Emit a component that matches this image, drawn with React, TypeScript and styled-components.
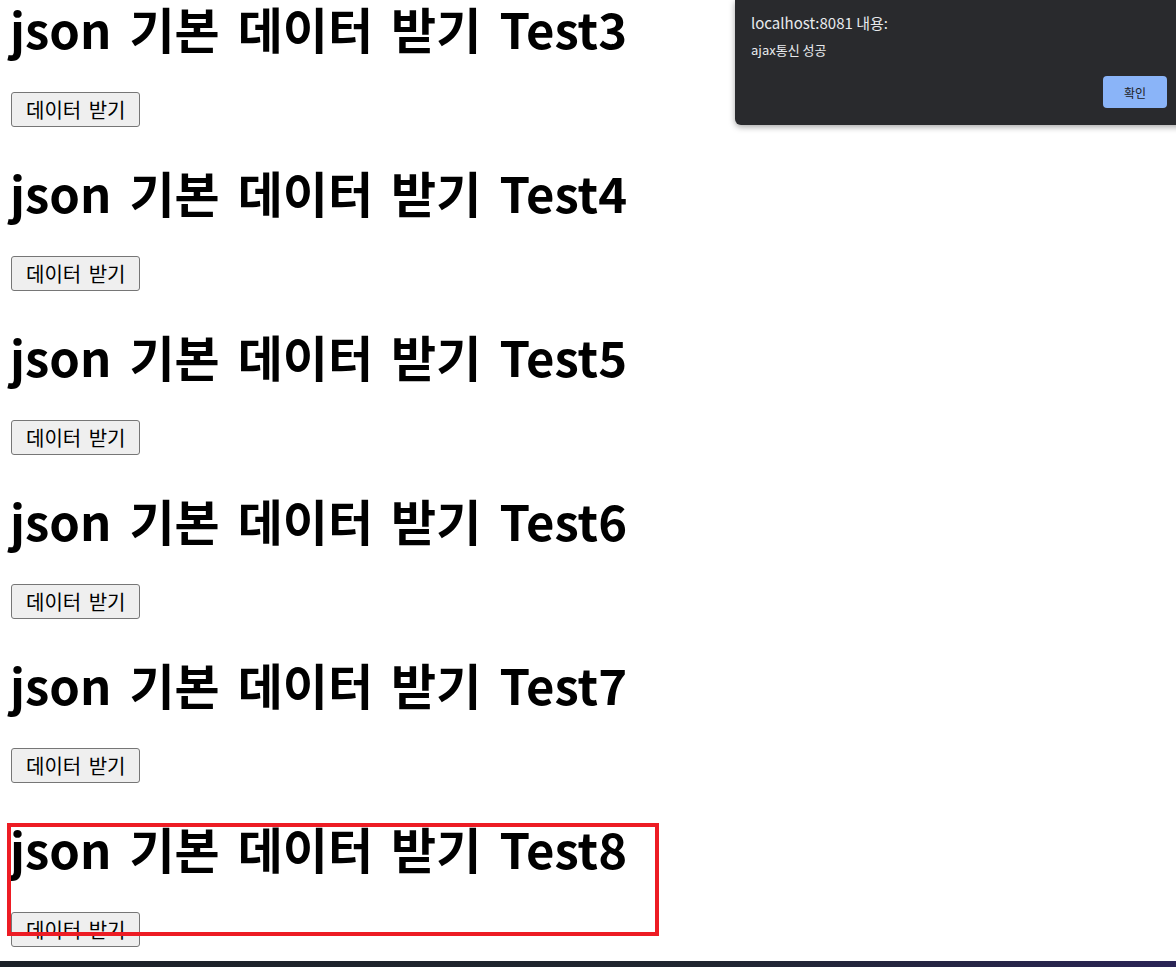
import * as React from 'react';
import styled, { createGlobalStyle } from 'styled-components';

const GlobalStyle = createGlobalStyle`
  html, body {
    margin: 0;
    padding: 0;
    background: #ffffff;
  }
  body {
    font-family: 'Noto Sans CJK KR', 'Noto Sans', sans-serif;
  }
`;

const Page = styled.div`
  position: relative;
  width: 1176px;
  height: 967px;
  overflow: hidden;
  background: #ffffff;
`;

const Content = styled.div`
  padding: 0 12px;
  margin-top: -4px;
`;

const Title = styled.h1`
  margin: 32px 0;
  font-family: 'Noto Sans CJK KR', sans-serif;
  font-size: 49px;
  line-height: 64px;
  font-weight: 700;
  word-spacing: 7px;
  color: #000000;
  margin-left: -2px;
  white-space: nowrap;
  &:first-child {
    margin-top: 0;
  }
`;

const Row = styled.div`
  height: 36px;
  display: flex;
  align-items: flex-start;
`;

const GetButton = styled.button`
  height: 35px;
  padding: 0 14px;
  margin-left: -1px;
  font-family: 'Noto Sans CJK KR', sans-serif;
  font-size: 20px;
  word-spacing: 3px;
  color: #000000;
  background: #efefef;
  border: 1px solid #767676;
  border-radius: 3px;
`;

const Dialog = styled.div`
  position: absolute;
  top: 0;
  left: 735px;
  right: -8px;
  height: 125px;
  background: #292a2d;
  border-radius: 0 0 0 6px;
  box-shadow: 0 2px 6px rgba(0, 0, 0, 0.35);
  padding: 13px 16px 0 16px;
  box-sizing: border-box;
  font-family: 'Noto Sans CJK KR', sans-serif;
  color: #e8eaed;
`;

const DialogTitle = styled.div`
  font-size: 15px;
  line-height: 20px;
`;

const DialogText = styled.div`
  margin-top: 9px;
  font-size: 13px;
  line-height: 16px;
`;

const DialogFooter = styled.div`
  display: flex;
  justify-content: flex-end;
  margin-top: 18px;
  padding-right: 1px;
`;

const OkButton = styled.button`
  width: 64px;
  height: 32px;
  border: none;
  border-radius: 4px;
  background: #8ab4f8;
  color: #202124;
  font-family: 'Noto Sans CJK KR', sans-serif;
  font-size: 12px;
`;

const Highlight = styled.div`
  position: absolute;
  left: 7px;
  top: 823px;
  width: 652px;
  height: 113px;
  box-sizing: border-box;
  border: 4px solid #ed1c24;
  pointer-events: none;
`;

const Taskbar = styled.div`
  position: absolute;
  left: 0;
  right: 0;
  bottom: 0;
  height: 6px;
  background: linear-gradient(90deg, #1c2128 0%, #202630 60%, #2a2456 100%);
`;

const items = [3, 4, 5, 6, 7, 8];

export default function App() {
  return (
    <>
      <GlobalStyle />
      <Page>
        <Content>
          {items.map((n) => (
            <React.Fragment key={n}>
              <Title>json 기본 데이터 받기 Test{n}</Title>
              <Row>
                <GetButton>데이터 받기</GetButton>
              </Row>
            </React.Fragment>
          ))}
        </Content>
        <Dialog>
          <DialogTitle>localhost:8081 내용:</DialogTitle>
          <DialogText>ajax통신 성공</DialogText>
          <DialogFooter>
            <OkButton>확인</OkButton>
          </DialogFooter>
        </Dialog>
        <Highlight />
        <Taskbar />
      </Page>
    </>
  );
}
